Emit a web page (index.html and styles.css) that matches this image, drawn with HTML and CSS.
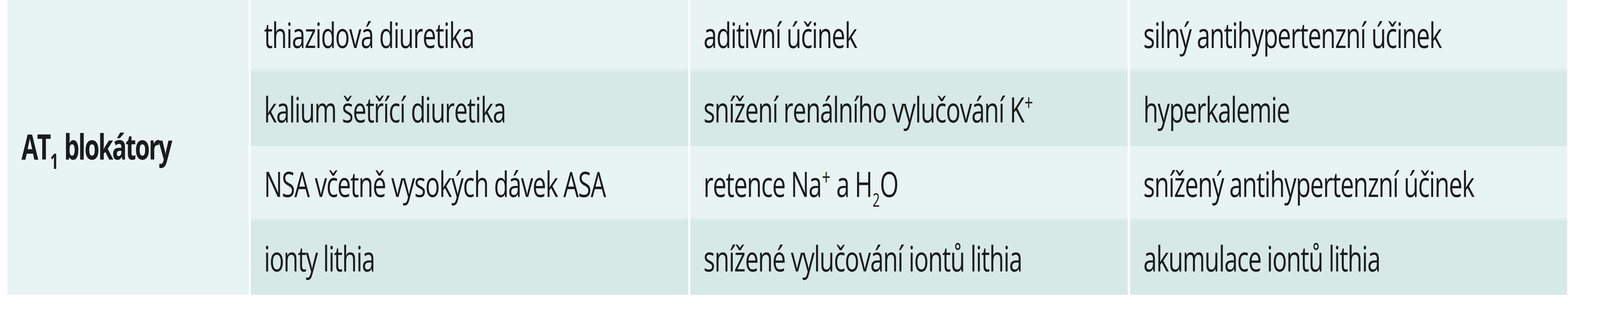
FILE: index.html
```html
<!DOCTYPE html>
<html lang="cs">
<head>
<meta charset="utf-8">
<title>AT1 blokátory – interakce</title>
<link rel="stylesheet" href="styles.css">
</head>
<body>
<div class="page">
  <div class="table">
    <div class="cell head"><span class="txt">AT<sub class="sub-b">1</sub> blokátory</span></div>

    <div class="cell light"><span class="txt">thiazidová diuretika</span></div>
    <div class="cell light"><span class="txt">aditivní účinek</span></div>
    <div class="cell light"><span class="txt">silný antihypertenzní účinek</span></div>

    <div class="cell dark"><span class="txt">kalium šetřící diuretika</span></div>
    <div class="cell dark"><span class="txt">snížení renálního vylučování K<sup class="sup">+</sup></span></div>
    <div class="cell dark"><span class="txt">hyperkalemie</span></div>

    <div class="cell light"><span class="txt">NSA včetně vysokých dávek ASA</span></div>
    <div class="cell light"><span class="txt">retence Na<sup class="sup">+</sup> a H<sub class="sub">2</sub>O</span></div>
    <div class="cell light"><span class="txt">snížený antihypertenzní účinek</span></div>

    <div class="cell dark"><span class="txt">ionty lithia</span></div>
    <div class="cell dark"><span class="txt">snížené vylučování iontů lithia</span></div>
    <div class="cell dark"><span class="txt">akumulace iontů lithia</span></div>
  </div>
</div>
</body>
</html>
```

FILE: styles.css
```css
html, body {
  margin: 0;
  padding: 0;
  background: #ffffff;
}

/* horizontal measures follow the 5919px-wide reference as viewport fractions */
.page {
  padding-left: 0.473vw;
  padding-right: 2.044vw;
}

.table {
  margin-top: -8px;
  display: grid;
  grid-template-columns: 15.07vw repeat(3, 1fr);
  grid-template-rows: repeat(4, 191px);
  column-gap: 0.135vw;
  font-family: "Open Sans", "DejaVu Sans", sans-serif;
  font-size: 90px;
  letter-spacing: -2.4px;
  color: #1b1b1b;
}

.cell {
  display: flex;
  align-items: center;
  padding-left: 0.83vw;
  white-space: nowrap;
  overflow: hidden;
  min-width: 0;
  box-sizing: border-box;
}

.txt {
  display: inline-block;
  white-space: nowrap;
  transform: scaleX(0.692);
  transform-origin: left center;
}

.head {
  grid-row: 1 / span 4;
  grid-column: 1;
  background: #e8f4f2;
  font-weight: 700;
  letter-spacing: -4.6px;
  padding-left: 0.88vw;
}

.light {
  background: #e8f4f2;
  border-bottom: 6px solid #e0eeeb;
  padding-top: 6px;
}

.dark {
  background: #d6e9e6;
}

.sup {
  font-size: 0.62em;
  line-height: 0;
  vertical-align: 0.55em;
  letter-spacing: 0;
  margin-left: 2px;
}

.sub {
  font-size: 0.52em;
  line-height: 0;
  vertical-align: -0.55em;
  letter-spacing: 0;
  margin-left: 2px;
}

.sub-b {
  font-size: 0.6em;
  line-height: 0;
  vertical-align: -0.45em;
  letter-spacing: 0;
  margin-left: 1px;
  margin-right: 2px;
}
```
